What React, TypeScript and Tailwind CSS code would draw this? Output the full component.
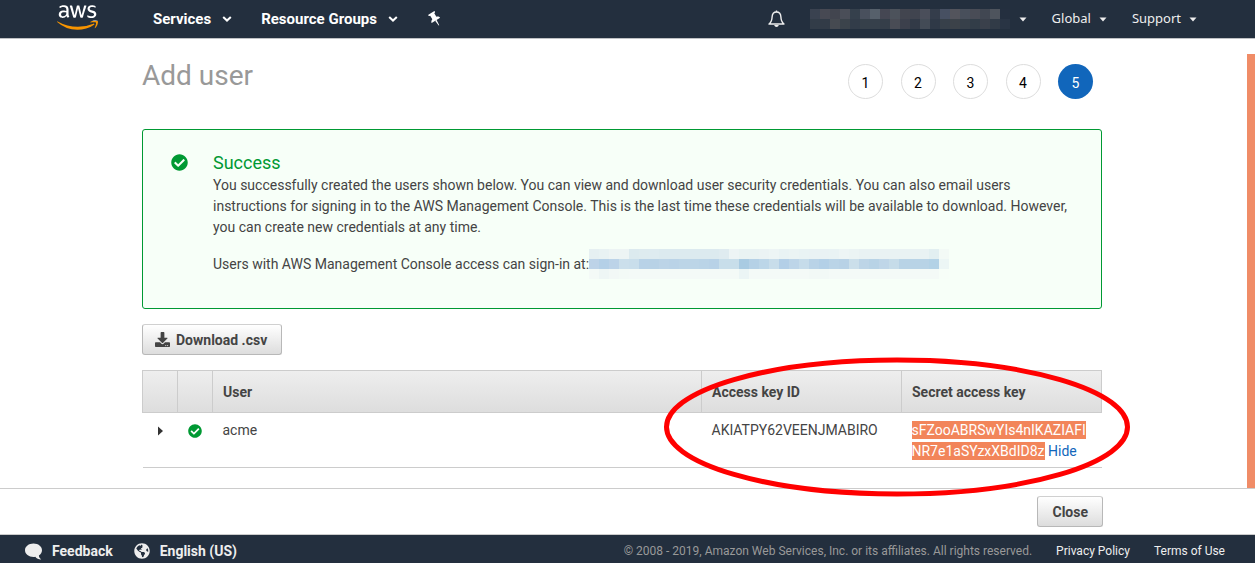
import React from "react";
import { FaAws, FaCheckCircle, FaDownload, FaGlobeAmericas } from "react-icons/fa";

const ACCOUNT_ROWS = [
  ["#3a4250", "#474953", "#42454f", "#4a4e58", "#35404c", "#49505d", "#56606b", "#454753", "#4c525b", "#42454f", "#40444f", "#4a4e5a", "#343d4b", "#475062", "#53545c", "#484f5b", "#494c56", "#414752", "#4e545d", "#242f3f"],
  ["#323c48", "#323b47", "#464a51", "#3b434b", "#323c49", "#36404a", "#36404b", "#353e49", "#494c55", "#3c404c", "#323a47", "#434b56", "#2f3947", "#37404a", "#3c4249", "#37404a", "#323d48", "#3a404b", "#313b47", "#293444"],
];

const LINK_ROWS = [
  ["#e6f0f2", "#e8f2f3", "#edf4f4", "#edf4f4", "#dceaef", "#deebef", "#deebf0", "#dceaef", "#dceaef", "#dceaef", "#dceaef", "#dceaef", "#dceaef", "#dfebf0", "#edf4f5", "#e9f3f3", "#e9f3f3", "#ebf3f4", "#edf5f5", "#e9f3f4", "#ebf4f4", "#e9f3f4", "#e9f2f4", "#e9f2f4", "#e9f3f4", "#edf5f5", "#ebf4f4", "#e9f2f3", "#e9f2f3", "#e9f2f3", "#e9f2f3", "#e9f2f3", "#e9f2f3", "#e9f2f3", "#e2eff1", "#f3faf6"],
  ["#bdd3e8", "#b4d0e7", "#bcd3e8", "#cbdfeb", "#c9deeb", "#b8d2e7", "#b8d2e6", "#bcd4e7", "#bad3e7", "#bcd5e7", "#bcd5e7", "#bad4e7", "#b8d2e7", "#c8deea", "#c8deea", "#a9cbe2", "#b5d1e6", "#bcd6e8", "#c8ddea", "#b3cfe7", "#bdd5e8", "#c6dcea", "#b9d3e7", "#b3d0e7", "#bad4e7", "#b8d2e6", "#cbdfea", "#bdd5e7", "#b8d3e6", "#bfd6e8", "#c6dce9", "#b8d3e6", "#b8d3e6", "#b8d3e6", "#b3d2e6", "#ecf6f5"],
  ["#f4faf7", "#eef6f5", "#f2f8f6", "#f3faf6", "#f4faf7", "#f4faf7", "#f4faf7", "#f4faf7", "#f4faf7", "#f4faf7", "#f4faf7", "#f4faf7", "#f4faf7", "#f4faf7", "#f4faf7", "#ebf5f5", "#f4faf7", "#f4faf7", "#f4faf7", "#f4faf7", "#f4faf7", "#f4faf7", "#f2f9f6", "#f2f9f6", "#f4faf7", "#f4faf7", "#f4faf7", "#f4faf7", "#f4faf7", "#f4faf7", "#f4faf7", "#f4faf7", "#f4faf7", "#f4faf7", "#f4faf7", "#f7fef8"],
];

function Redacted({ rows }: { rows: string[][] }) {
  return (
    <span className="flex flex-col" aria-hidden="true">
      {rows.map((row, r) => (
        <span key={r} className="flex">
          {row.map((color, c) => (
            <span key={c} className="h-[10px] w-[10px]" style={{ backgroundColor: color }} />
          ))}
        </span>
      ))}
    </span>
  );
}

function Chevron() {
  return (
    <svg viewBox="0 0 10 6" className="h-[6px] w-[10px]" fill="none" stroke="currentColor" strokeWidth="2">
      <path d="M1.2 1l3.8 3.6L8.8 1" />
    </svg>
  );
}

function Caret() {
  return (
    <svg viewBox="0 0 8 5" className="h-[5px] w-2" fill="currentColor">
      <path d="M0.5 0.5h7L4 4.5z" />
    </svg>
  );
}

function Bell() {
  return (
    <svg viewBox="0 0 17 18" className="h-[18px] w-[17px]" fill="none" stroke="currentColor" strokeWidth="1.4" strokeLinejoin="round">
      <path d="M8.5 2C5.6 2 4.2 4.2 4.1 7c-.1 3.400-.8 5.300-3.100 7h15c-2.300-1.700-3-3.600-3.100-7-.1-2.800-1.500-5-4.400-5z" />
      <path d="M8.5 0.500v1.500" />
      <path d="M6.200 15h4.600c-.3 1.300-1.200 2-2.300 2s-2-.7-2.300-2z" fill="currentColor" stroke="none" />
    </svg>
  );
}

function Pin() {
  return (
    <svg viewBox="0 0 16 16" className="size-4" fill="currentColor">
      <g transform="rotate(-32 8 8)">
        <path d="M4.700 0.800h6.600c.6 0 .6 1.600 0 1.700l-.9.300v4c1.500.5 2.500 1.500 2.600 2.900H3c.1-1.400 1.100-2.400 2.600-2.900v-4l-.9-.3c-.6-.1-.6-1.700 0-1.700z" />
        <path d="M7.200 9.500h1.600L8.300 15.500h-.6z" />
      </g>
    </svg>
  );
}

function SpeechBubble() {
  return (
    <svg viewBox="0 0 17 17" className="size-[17px]" fill="currentColor">
      <path d="M8.500 0.500C13.200 0.500 17 3.400 17 7.200c0 2.200-1.200 4.100-3.100 5.300.1 1.600.9 2.900 2.300 3.900-2.500.1-4.600-.9-5.900-2.700-.6.100-1.200.2-1.800.2C3.800 13.900 0 11 0 7.200S3.800.5 8.500.5z" />
    </svg>
  );
}

function AwsLogo() {
  return (
    <a href="#home" aria-label="AWS home" className="mb-[3px] flex">
      <svg width="0" height="0" className="absolute">
        <defs>
          <linearGradient id="aws-fill" gradientUnits="userSpaceOnUse" x1="0" y1="0" x2="0" y2="512">
            <stop offset="0.6" stopColor="#ffffff" />
            <stop offset="0.6" stopColor="#f79400" />
          </linearGradient>
        </defs>
      </svg>
      <FaAws className="h-[33px] w-[41px]" style={{ fill: "url(#aws-fill)" }} />
    </a>
  );
}

const BUTTON =
  "flex h-[31px] items-center rounded-[3px] border border-[#b8b8b8] border-t-[#d0d0d0] bg-linear-to-b from-white to-[#dddddd] pt-[2px] font-bold text-[#444444]";
const SHADOW = "[text-shadow:0_1px_0_#000]";

function TopBar() {
  return (
    <header className="flex h-[39px] shrink-0 items-center justify-between border-b border-[#bfc1c4] bg-[#232f3e] pr-[58px] pl-[57px] text-white">
      <nav className={`flex items-center text-[15px] font-bold ${SHADOW}`}>
        <AwsLogo />
        <button className="ml-[55px] flex items-center gap-[11px]">Services <Chevron /></button>
        <button className="ml-[29px] flex items-center gap-[11px]">Resource Groups <Chevron /></button>
        <button aria-label="Pin shortcuts" className="ml-[29px]">
          <Pin />
        </button>
      </nav>
      <div className={`flex items-center font-['Noto_Sans',sans-serif] text-[13px] text-[#eeeeee] ${SHADOW}`}>
        <button aria-label="Notifications"><Bell /></button>
        <button aria-label="Account" className="ml-[25px] flex items-center gap-[9px]">
          <Redacted rows={ACCOUNT_ROWS} />
          <Caret />
        </button>
        <button className="ml-[25px] flex items-center gap-2">Global <Caret /></button>
        <button className="ml-[25px] flex items-center gap-2">Support <Caret /></button>
      </div>
    </header>
  );
}

function Steps() {
  return (
    <ol className="mr-[9px] flex w-[245px] justify-between text-[14px] text-black">
      {[1, 2, 3, 4, 5].map((n) => (
        <li
          key={n}
          className={
            n === 5
              ? "flex size-[35px] items-center justify-center rounded-full bg-[#1166bb] pt-[3px] text-white"
              : "flex size-[35px] items-center justify-center rounded-full border border-[#dddddd] pt-[3px]"
          }
        >
          {n}
        </li>
      ))}
    </ol>
  );
}

function SuccessPanel() {
  return (
    <section className="mt-[30px] flex h-[180px] rounded-[3px] border border-[#009933] bg-[#f7fff8] px-7 pt-[21px]">
      <FaCheckCircle className="mt-[3px] size-[17px] shrink-0 text-[#009933]" />
      <div className="ml-[25px] leading-[21px]">
        <h2 className="text-[18px] leading-6 text-[#009933]">Success</h2>
        <p>
          You successfully created the users shown below. You can view and download user security credentials. You can
          also email users instructions for signing in to the AWS Management Console. This is the last time these
          credentials will be available to download. However, you can create new credentials at any time.
        </p>
        <div className="mt-[11px] flex items-center">
          <span>Users with AWS Management Console access can sign-in at:</span>
          <Redacted rows={LINK_ROWS} />
        </div>
      </div>
    </section>
  );
}

function UserTable() {
  return (
    <div className="relative mt-[15px]">
      <table className="w-full table-fixed border-collapse border-b border-[#cccccc] text-left">
        <colgroup>
          <col className="w-[35px]" />
          <col className="w-[35px]" />
          <col />
          <col className="w-[200px]" />
          <col className="w-[200px]" />
        </colgroup>
        <thead className="bg-linear-to-b from-[#eeeeee] to-[#dddddd]">
          <tr className="h-[42px]">
            <th className="border border-[#cccccc]" aria-label="Expand" />
            <th className="border border-[#cccccc]" aria-label="Status" />
            <th className="border border-[#cccccc] px-[10px] pt-[2px]">User</th>
            <th className="border border-[#cccccc] px-[10px] pt-[2px]">Access key ID</th>
            <th className="border border-[#cccccc] px-[10px] pt-[2px]">Secret access key</th>
          </tr>
        </thead>
        <tbody>
          <tr className="align-top leading-[21px]">
            <td className="pt-[13px]">
              <button aria-label="Show details" className="mx-auto block">
                <svg viewBox="0 0 5 10" className="h-[10px] w-[5px]" fill="#333333">
                  <path d="M0 0.5l5 4.5-5 4.5z" />
                </svg>
              </button>
            </td>
            <td className="pt-[11px]">
              <FaCheckCircle className="mx-auto size-[14px] text-[#009933]" />
            </td>
            <td className="px-[10px] pt-[7px]">acme</td>
            <td className="px-[10px] pt-[7px]">AKIATPY62VEENJMABIRO</td>
            <td className="px-[10px] pt-[7px] pb-[5px]">
              <span className="bg-[#f2855a] py-px text-white">sFZooABRSwYIs4nIKAZIAFI<br />NR7e1aSYzxXBdID8z</span>{" "}
              <a href="#hide" className="text-[#1166bb]">Hide</a>
            </td>
          </tr>
        </tbody>
      </table>
      <svg
        viewBox="0 0 468 142"
        className="pointer-events-none absolute -top-[14px] -right-[29px] z-10 h-[142px] w-[468px]"
        fill="none"
        stroke="#ff0000"
        strokeWidth="5"
        aria-hidden="true"
      >
        <ellipse cx="234" cy="71" rx="230.5" ry="67" />
      </svg>
    </div>
  );
}

export default function App() {
  return (
    <div className="flex min-h-screen flex-col bg-white font-[Roboto,sans-serif] text-[14px] text-[#444444]">
      <TopBar />
      <div className="flex grow">
        <main className="flex grow flex-col pr-[145px] pl-[142px]">
          <div className="mt-[25px] flex justify-between">
            <h1 className="text-[28px] leading-6 text-[#999999]">Add user</h1>
            <Steps />
          </div>
          <SuccessPanel />
          <button className={`mt-[15px] gap-[6px] self-start pr-[14px] pl-3 ${BUTTON}`}>
            <FaDownload className="mb-[2px] size-[15px]" />
            Download .csv
          </button>
          <UserTable />
        </main>
        <div className="mt-[15px] w-2 shrink-0 bg-[#f08c67]" />
      </div>
      <div className="flex h-[47px] shrink-0 items-center justify-end border-t border-b border-[#cccccc] pr-[152px]">
        <button className={`px-[14px] ${BUTTON}`}>Close</button>
      </div>
      <footer className="flex h-7 shrink-0 items-center justify-between bg-[#232f3e] pt-[4px] pr-[30px] pl-[25px] text-[12px] text-[#eeeeee]">
        <div className="flex items-center gap-[21px] text-[14px] font-bold">
          <a href="#feedback" className="flex items-center gap-[10px]"><SpeechBubble />Feedback</a>
          <button className="flex items-center gap-[10px]"><FaGlobeAmericas className="size-4" />English (US)</button>
        </div>
        <div className="flex gap-6">
          <span className="text-[#999999]">© 2008 - 2019, Amazon Web Services, Inc. or its affiliates. All rights reserved.</span>
          <a href="#privacy">Privacy Policy</a>
          <a href="#terms">Terms of Use</a>
        </div>
      </footer>
    </div>
  );
}
